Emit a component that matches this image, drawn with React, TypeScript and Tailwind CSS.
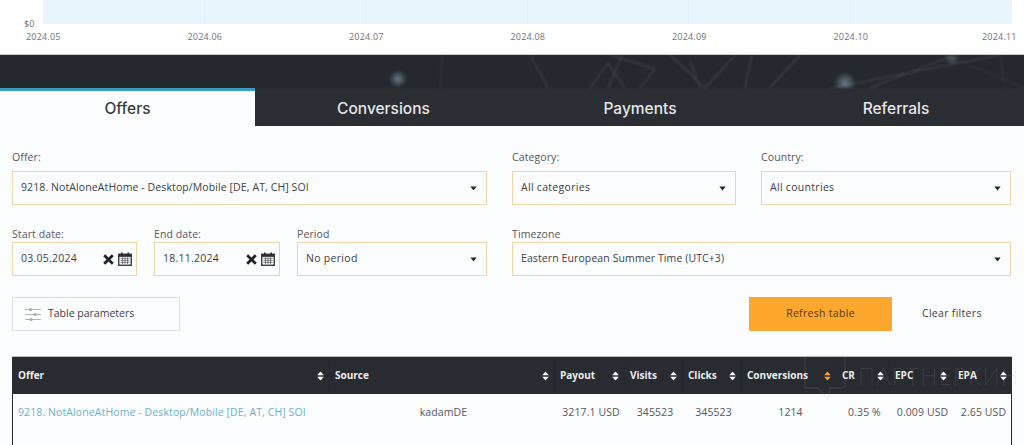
import React from "react";

const font = { fontFamily: '"Open Sans", "Noto Sans", sans-serif' };

function Caret() {
  return (
    <svg width="7" height="5" viewBox="0 0 7 5" className="shrink-0">
      <path d="M0.3 0.5H6.7L3.5 4.5Z" fill="#26282c" />
    </svg>
  );
}

function Sort({ color = "#ffffff" }: { color?: string }) {
  return (
    <svg width="7" height="10" viewBox="0 0 7 10" className="shrink-0">
      <path d="M3.5 0.5L6.8 4.2H0.2Z M0.2 5.8H6.8L3.5 9.5Z" fill={color} />
    </svg>
  );
}

function Calendar() {
  return (
    <svg width="14" height="14" viewBox="0 0 14 14" className="shrink-0">
      <rect x="0.75" y="2.25" width="12.5" height="11" fill="none" stroke="#2b2d31" strokeWidth="1.3" />
      <rect x="0.75" y="2.25" width="12.5" height="2.6" fill="#2b2d31" />
      <rect x="3" y="0.5" width="1.6" height="3" fill="#2b2d31" />
      <rect x="9.4" y="0.5" width="1.6" height="3" fill="#2b2d31" />
      <path d="M2.5 6.3h9M2.5 8.3h9M2.5 10.3h9M4.5 5.5v6.5M7 5.5v6.5M9.5 5.5v6.5" stroke="#2b2d31" strokeWidth="0.8" opacity="0.75" />
    </svg>
  );
}

function Cross() {
  return (
    <svg width="11" height="11" viewBox="0 0 11 11" className="shrink-0">
      <path d="M1.2 1.2L9.8 9.8M9.8 1.2L1.2 9.8" stroke="#1e2024" strokeWidth="2.7" />
    </svg>
  );
}

function Sliders() {
  return (
    <svg width="16" height="15" viewBox="0 0 16 15" className="shrink-0">
      <path d="M0 2.5H16M0 7.5H16M0 12.5H16" stroke="#b4b7b9" strokeWidth="1" />
      <circle cx="5.5" cy="2.5" r="1.5" fill="#a6a9ac" />
      <circle cx="10" cy="7.5" r="1.5" fill="#a6a9ac" />
      <circle cx="6" cy="12.5" r="1.5" fill="#a6a9ac" />
    </svg>
  );
}

function Field({ label, className, children }: { label: string; className: string; children: React.ReactNode }) {
  return (
    <div className={`flex flex-col ${className}`}>
      <div className="text-[10.5px] leading-[14px] tracking-[0.1px] text-[#55585c]">{label}</div>
      {children}
    </div>
  );
}

function Select({ label, value, className, tall, tight }: { label: string; value: string; className: string; tall?: boolean; tight?: boolean }) {
  return (
    <Field label={label} className={className}>
      <div className={`${tall ? "mt-[7px]" : "mt-[1px]"} ${tight ? "tracking-[0.1px]" : "tracking-[0.3px]"} flex h-[34px] items-center justify-between border border-[#ecd6a8] bg-[#fcfdfe] pl-[8px] pr-[9px] text-[10.5px] text-[#3c3f43]`}>
        <span>{value}</span>
        <Caret />
      </div>
    </Field>
  );
}

function DateField({ label, value, className }: { label: string; value: string; className: string }) {
  return (
    <Field label={label} className={className}>
      <div className="mt-[1px] flex h-[34px] items-center border border-[#ecd6a8] bg-[#fcfdfe] pl-[8px] pr-[4px] text-[10.5px] tracking-[0.25px] text-[#3c3f43]">
        <span className="flex-1">{value}</span>
        <Cross />
        <span className="w-[4px]" />
        <Calendar />
      </div>
    </Field>
  );
}

const cols = "grid grid-cols-[318px_225px_70px_58px_59px_95px_53px_63px_59px]";

const headers = ["Offer", "Source", "Payout", "Visits", "Clicks", "Conversions", "CR", "EPC", "EPA"];
const cells = ["kadamDE", "3217.1 USD", "345523", "345523", "1214", "0.35 %", "0.009 USD", "2.65 USD"];
const months = ["2024.05", "2024.06", "2024.07", "2024.08", "2024.09"];

export default function App() {
  return (
    <div className="h-[445px] w-[1024px] overflow-hidden bg-[#fbfdfe]" style={font}>
      {/* chart */}
      <div className="h-[54px] bg-white pl-[24px] pr-[12px]">
        <div className="flex h-[24px]">
          <div className="flex w-[19px] items-end text-[9px] leading-[9px] text-[#6f7174]">
            <span className="translate-y-[4px]">$0</span>
          </div>
          <div className="grid flex-1 grid-cols-6 bg-[#e8f5fc]">
            {[0, 1, 2, 3, 4, 5].map((i) => (
              <div key={i} className="border-r border-[#e0f0f9] last:border-r-0" />
            ))}
          </div>
        </div>
        <div className="ml-[2px] mt-[7px] flex text-[9px] leading-[11px] tracking-[0.2px] text-[#6f7174]">
          {months.map((d) => (
            <span key={d} className="w-[161.5px] shrink-0">{d}</span>
          ))}
          <span className="w-[148.5px] shrink-0">2024.10</span>
          <span className="shrink-0">2024.11</span>
        </div>
      </div>

      {/* dark band with tabs */}
      <div className="relative h-[72px] overflow-hidden border-t border-[#c9cbcd] bg-[#2a2d32]">
        <svg className="absolute left-0 top-0 blur-[1px]" width="1024" height="33" viewBox="0 0 1024 33">
          <defs>
            <radialGradient id="glow">
              <stop offset="0" stopColor="#7d96a3" stopOpacity="0.75" />
              <stop offset="1" stopColor="#7d96a3" stopOpacity="0" />
            </radialGradient>
          </defs>
          <rect width="1024" height="33" fill="#25282c" />
          <g stroke="#5a6067" strokeWidth="1.2" opacity="0.5" fill="none">
            <path d="M608 33L622 0M590 33L608 8L625 33M640 33L655 14L610 0M670 0L705 33L735 0M700 33L690 6M745 33L752 0M770 33L800 0M830 33L1000 0M870 33L950 2M530 0L548 33" />
            <path d="M950 2L1024 33M1000 0L1005 33M440 33L442 0" opacity="0.5" />
          </g>
          <circle cx="398" cy="24" r="9" fill="url(#glow)" />
          <circle cx="845" cy="28" r="11" fill="url(#glow)" />
          <circle cx="952" cy="3" r="8" fill="url(#glow)" opacity="0.6" />
        </svg>
        <div className="absolute inset-x-0 bottom-0 flex h-[38px] text-[15.5px] font-medium" style={{ fontFamily: '"Inter", sans-serif' }}>
          <div className="flex w-[255px] items-center justify-center border-t-[3px] border-[#3a9dc4] bg-[#fbfdfe] pt-[1px] text-[#3a3c40]">Offers</div>
          <div className="flex w-[257px] items-center justify-center pt-[4px] text-[#e6e7e8]">Conversions</div>
          {["Payments", "Referrals"].map((t) => (
            <div key={t} className="flex w-[256px] items-center justify-center pt-[4px] text-[#e6e7e8]">{t}</div>
          ))}
        </div>
      </div>

      {/* filters */}
      <div className="px-[12px] pt-[24px]">
        <div className="flex">
          <Select tall tight label="Offer:" value="9218. NotAloneAtHome - Desktop/Mobile [DE, AT, CH] SOI" className="w-[475px]" />
          <Select tall label="Category:" value="All categories" className="ml-[25px] w-[224px]" />
          <Select tall label="Country:" value="All countries" className="ml-[25px] w-[250px]" />
        </div>
        <div className="mt-[22px] flex">
          <DateField label="Start date:" value="03.05.2024" className="w-[125px]" />
          <DateField label="End date:" value="18.11.2024" className="ml-[17px] w-[126px]" />
          <Select label="Period" value="No period" className="ml-[17px] w-[190px]" />
          <Select tight label="Timezone" value="Eastern European Summer Time (UTC+3)" className="ml-[25px] w-[499px]" />
        </div>
        <div className="mt-[21px] flex items-center">
          <div className="flex h-[34px] w-[168px] items-center border border-[#dcdee0] pl-[12px] text-[10.5px] tracking-[0px] text-[#3c3f43]">
            <Sliders />
            <span className="ml-[7px]">Table parameters</span>
          </div>
          <div className="ml-[569px] flex h-[34px] w-[143px] items-center justify-center bg-[#fca72e] text-[10.5px] tracking-[0.3px] text-[#5a3a14]">Refresh table</div>
          <div className="ml-[30px] text-[10.5px] tracking-[0.3px] text-[#3c3f43]">Clear filters</div>
        </div>

        {/* table */}
        <div className="relative mt-[25px] w-[1000px]">
          <div className={`${cols} h-[38px] border-t border-[#b9bbbd] bg-[#282b30] text-[10px] font-bold text-[#eceded]`}>
            {headers.map((h) => (
              <div key={h} className="flex items-center justify-between border-r border-[#24272b] px-[5px] last:border-r-0 first:pl-[6px]">
                <span>{h}</span>
                <Sort color={h === "Conversions" ? "#f5a33a" : "#ffffff"} />
              </div>
            ))}
          </div>
          <div className={`${cols} h-[60px] border-x border-[#282b30] pt-[11px] text-[10.5px] tracking-[0.1px] text-[#55585c]`}>
            <div className="pl-[5px] text-[#6fb1c4]">9218. NotAloneAtHome - Desktop/Mobile [DE, AT, CH] SOI</div>
            {cells.map((c, i) => (
              <div key={i} className="text-center">{c}</div>
            ))}
          </div>
          {/* watermark */}
          <div className="pointer-events-none absolute left-[792px] top-[-1px] flex items-start opacity-[0.13]">
            <svg width="42" height="46" viewBox="0 0 42 46" className="shrink-0">
              <path d="M4 1H38Q41 1 41 4V30Q41 33 38 33H26L24 44L14 33H4Q1 33 1 30V4Q1 1 4 1Z" fill="none" stroke="#9a9da0" strokeWidth="1.5" />
            </svg>
            <span className="ml-[12px] mt-[6px] text-[24px] font-light leading-[30px] tracking-[1px] whitespace-nowrap text-[#9a9da0]">ПАРТНЕРКИН</span>
          </div>
        </div>
      </div>
    </div>
  );
}
